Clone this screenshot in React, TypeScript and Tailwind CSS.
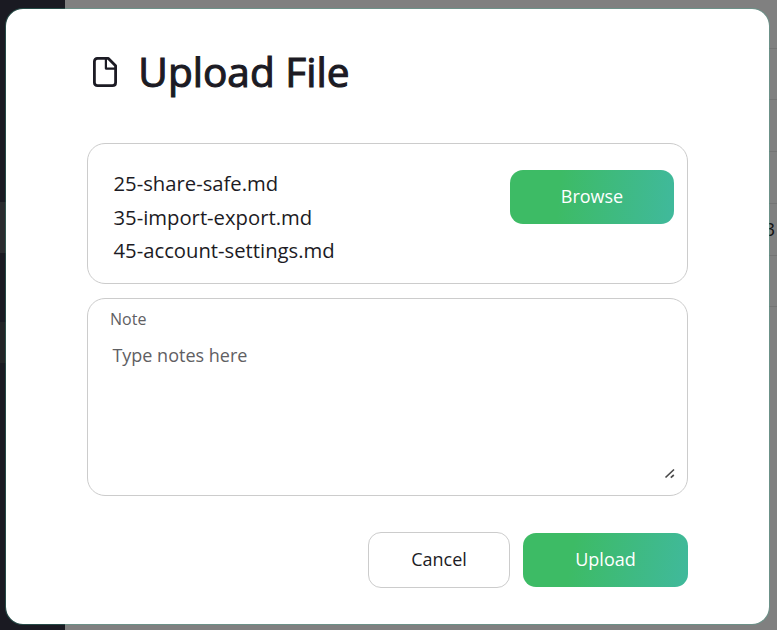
const files = ['25-share-safe.md', '35-import-export.md', '45-account-settings.md'];

function FileIcon() {
  return (
    <svg className="block h-[32px] w-[26px]" viewBox="0 0 26 32" fill="none" stroke="#1c1b24" strokeLinejoin="round">
      <path d="M5 2.4H16.4L23.6 9.8V26.4Q23.6 29.6 20.4 29.6H5.6Q2.4 29.6 2.4 26.4V5.6Q2.4 2.4 5.6 2.4Z" strokeWidth="2.8" />
      <path d="M13.9 2.8V12.6H23.4" strokeWidth="2.2" />
    </svg>
  );
}

function Backdrop() {
  return (
    <div className="flex h-full w-full">
      <div className="flex w-[65px] flex-col bg-[#1a1a22]">
        <div className="mt-[202px] h-[51px] bg-[#2a2b2f]" />
        <div className="mt-[69px] h-[41px] bg-[#232427]" />
      </div>
      <div className="flex flex-1 flex-col bg-[#808080] text-right text-[18px] text-[#111111]">
        <div className="h-[49px] border-b border-[#747474]" />
        <div className="h-[51px] border-b border-[#747474]" />
        <div className="h-[52px] border-b border-[#747474]" />
        <div className="h-[52px] border-b border-[#747474]" />
        <div className="h-[52px] border-b border-[#747474] pr-[2px] leading-[51px]">3</div>
        <div className="h-[51px] border-b border-[#747474]" />
      </div>
    </div>
  );
}

export default function App() {
  return (
    <div className="relative h-[630px] w-[777px] overflow-hidden font-['Open_Sans',sans-serif] text-[#1c1b24]">
      <Backdrop />
      <div className="absolute top-[8px] left-[5px] flex h-[617px] w-[765px] flex-col rounded-[18px] border border-[#40b99c]/30 bg-white bg-clip-padding pr-[81px] pl-[81px]">
        <header className="mt-[33px] flex h-[60px] items-center">
          <div className="ml-[5px]"><FileIcon /></div>
          <h1 className="ml-[20.3px] text-[40.6px] leading-[60px] font-normal whitespace-nowrap [-webkit-text-stroke:1.1px_#1c1b24]">Upload File</h1>
        </header>
        <section className="mt-[41px] flex h-[141px] shrink-0 justify-between rounded-[18px] border border-[#cccccc] pt-[23px] pr-[13px] pl-[25.5px]">
          <ul className="mt-[0.2px] text-[20.25px] leading-[33.5px]">
            {files.map((f) => <li key={f}>{f}</li>)}
          </ul>
          <button className="mt-[3px] h-[54px] w-[164px] rounded-[13px] bg-[linear-gradient(95deg,#3dbb65_0%,#3dbb65_30%,#40b99c_100%)] pb-[2px] text-[18px] text-white">Browse</button>
        </section>
        <section className="mt-[14px] flex h-[198px] shrink-0 flex-col rounded-[18px] border border-[#cccccc] pr-[11px] pl-[22px] text-[#5f6063]">
          <label className="mt-[8px] text-[16px] leading-[24px]">Note</label>
          <div className="mt-[12px] ml-[2.4px] text-[18px] leading-[24px]">Type notes here</div>
          <svg className="mt-auto mb-[15px] self-end" width="12" height="12" viewBox="0 0 12 12" fill="none" stroke="#4a4a4a" strokeWidth="1.7">
            <path d="M1.5 9.5L10 1.5M6.8 9.6L9.8 7" />
          </svg>
        </section>
        <footer className="mt-[36px] flex justify-end gap-[13px] text-[18px]">
          <button className="h-[56px] w-[142px] rounded-[13px] border border-[#cccccc] pb-[2px]">Cancel</button>
          <button className="mt-[1px] h-[54px] w-[165px] rounded-[13px] bg-[linear-gradient(100deg,#3dbb65_0%,#3dbb65_30%,#40b99c_100%)] pb-[2px] text-white">Upload</button>
        </footer>
      </div>
    </div>
  );
}
